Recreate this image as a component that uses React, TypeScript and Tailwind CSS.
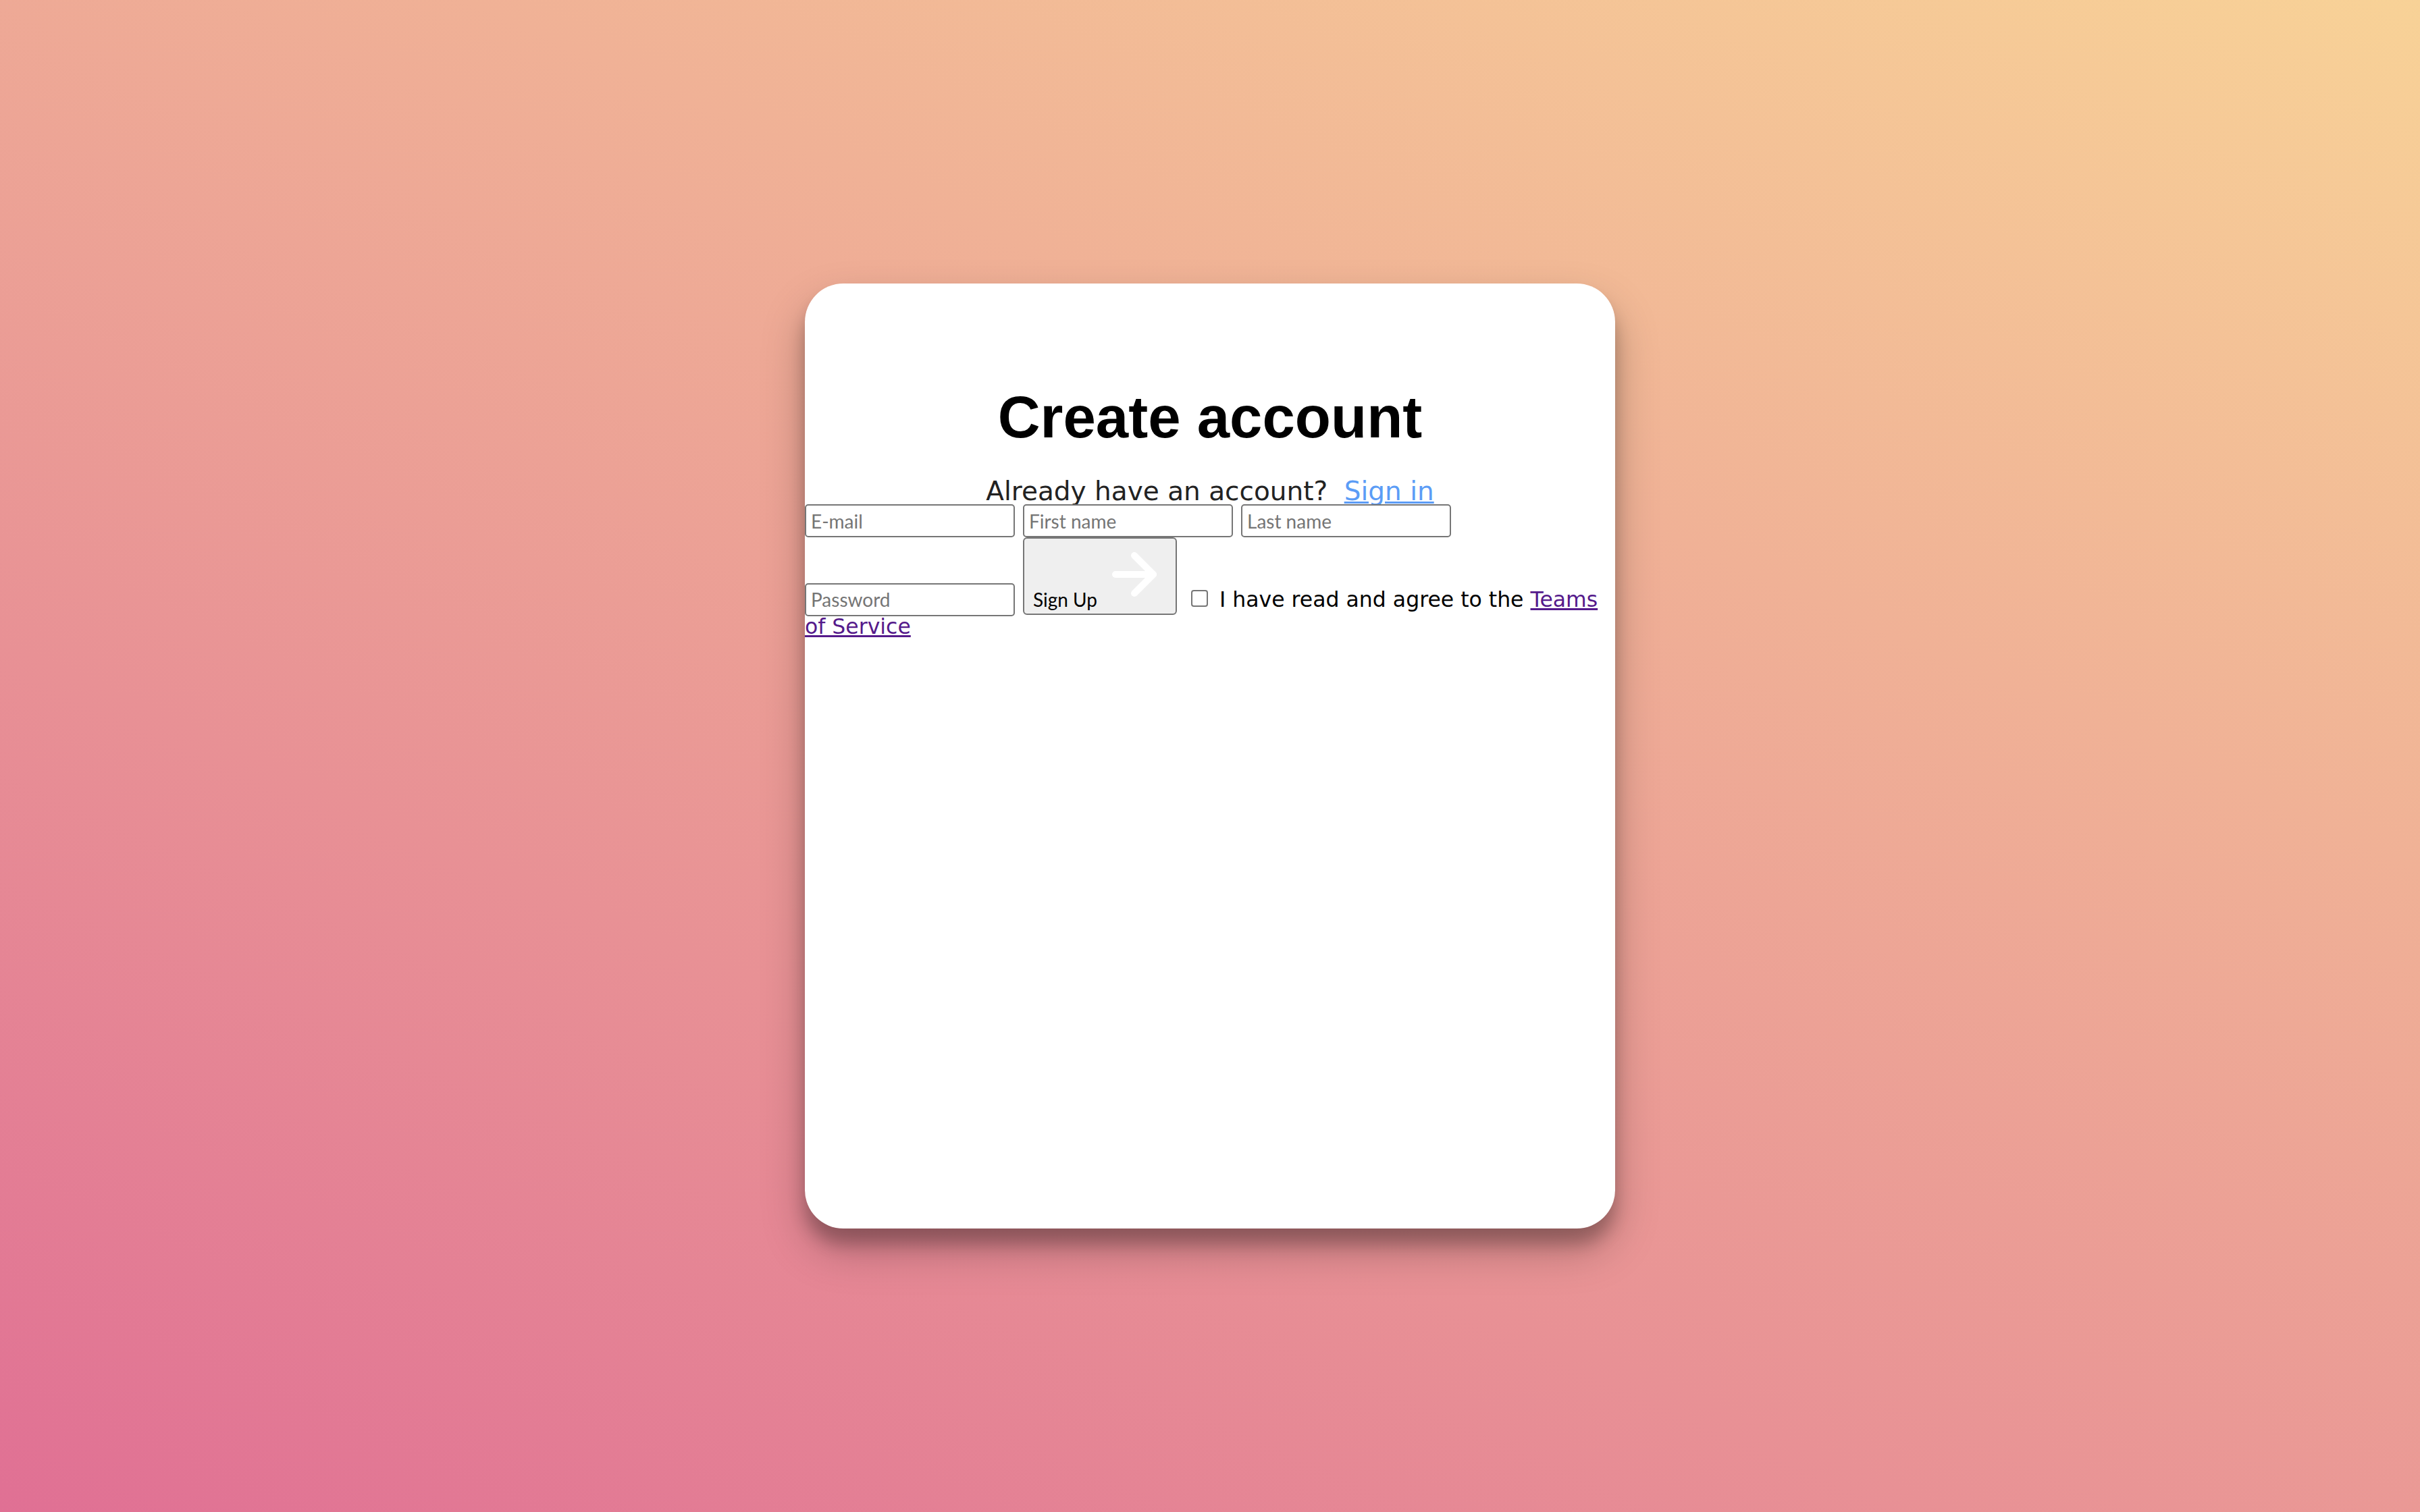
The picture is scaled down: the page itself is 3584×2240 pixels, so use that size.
import React from 'react';

function ArrowIcon() {
  return (
    <svg
      className="inline align-baseline"
      width={96}
      height={96}
      viewBox="0 0 24 24"
      fill="none"
      stroke="#ffffff"
      strokeWidth={2.5}
      strokeLinecap="round"
      strokeLinejoin="round"
    >
      <path d="M5 12h14" />
      <path d="m12 5 7 7-7 7" />
    </svg>
  );
}

const inputCls =
  "block w-[311px] h-[49px] border-2 border-[#767676] rounded-[5px] bg-white px-[7px] text-[28px] font-[Lato,sans-serif] text-black placeholder:text-[#757575] outline-none";

export default function App() {
  return (
    <div className="w-full h-screen flex items-center justify-center bg-[linear-gradient(24deg,#e07094,#f8d297)]">
      <div className="w-[1200px] h-[1400px] rounded-[57px] bg-white shadow-[0_32px_64px_rgba(0,0,0,0.25),0_23px_23px_rgba(0,0,0,0.22)] pt-[154px]">
        <h1 className="text-center text-[87px] leading-[87px] font-bold text-black font-['Liberation_Sans',Arial,sans-serif]">
          Create account
        </h1>
        <p className="mt-[47px] text-center text-[39px] leading-[39px] text-[#222] font-['DejaVu_Sans',sans-serif]">
          Already have an account?{' '}
          <a href="#" className="ml-[12px] underline text-[#5b9cf6]">Sign in</a>
        </p>

        <form className="font-['DejaVu_Sans',sans-serif] text-black" onSubmit={e => e.preventDefault()}>
          <div className="flex gap-[12px]">
            <input type="email" placeholder="E-mail" className={inputCls} />
            <input type="text" placeholder="First name" className={inputCls} />
            <input type="text" placeholder="Last name" className={inputCls} />
          </div>

          <div className="text-[31.5px] leading-[31px]">
            <input
              type="password"
              placeholder="Password"
              className="inline-block align-baseline w-[311px] h-[49px] border-2 border-[#767676] rounded-[5px] bg-white px-[7px] text-[28px] font-[Lato,sans-serif] text-black placeholder:text-[#757575] outline-none"
            />
            <button
              type="submit"
              className="inline-block align-baseline ml-[12px] w-[228px] h-[115px] border-2 border-[#767676] rounded-[6px] bg-[#efefef] px-[10px] py-[2px] text-center whitespace-nowrap text-[28px] font-[Lato,sans-serif] text-black"
            >
              Sign Up{' '}
              <ArrowIcon />
            </button>
            <input
              type="checkbox"
              className="appearance-none inline-block align-baseline ml-[21px] mr-[17px] w-[25px] h-[25px] border-2 border-[#767676] rounded-[4px] bg-white"
            />
            <span>
              I have read and agree to the{' '}
              <a href="#" className="underline text-[#551a8b]">Teams of Service</a>
            </span>
          </div>
        </form>
      </div>
    </div>
  );
}
